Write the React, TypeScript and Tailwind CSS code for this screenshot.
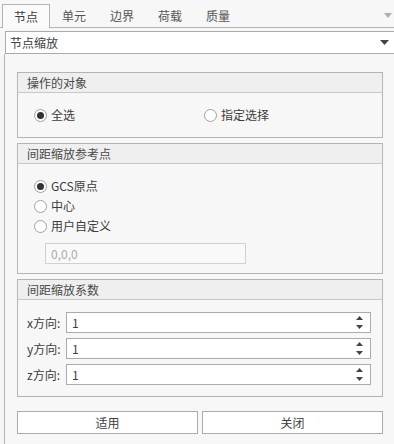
import React from 'react'

const font = { fontFamily: '"Noto Sans CJK SC", "Noto Sans", sans-serif' }

const tabs = ['节点', '单元', '边界', '荷载', '质量']

const Radio = ({ checked, label }: { checked?: boolean; label: string }) => (
  <div className="flex items-center gap-[4px] h-[20px]">
    <span className="w-[13px] h-[13px] rounded-full border border-[#a0a0a0] bg-white flex items-center justify-center">
      {checked && <span className="w-[7px] h-[7px] rounded-full bg-[#333]" />}
    </span>
    <span className="text-[12px] text-[#3c3c3c] leading-none">{label}</span>
  </div>
)

const GroupBox = ({ title, className, children }: { title: string; className: string; children: React.ReactNode }) => (
  <div className={`border border-[#b4b4b4] bg-[#f7f7f7] flex flex-col ${className}`}>
    <div className="h-[20px] bg-[#efefef] border-b border-[#c8c8c8] pl-[9px] flex items-center text-[12px] text-[#4a4a4a] shrink-0">
      {title}
    </div>
    {children}
  </div>
)

const Spin = ({ label }: { label: string }) => (
  <div className="flex items-center h-[21px]">
    <span className="w-[39px] text-[12px] text-[#3c3c3c]">{label}</span>
    <div className="w-[305px] h-[21px] border border-[#ababab] bg-white flex items-center justify-between pl-[5px] pr-[6px]">
      <span className="text-[12px] text-[#3c3c3c]">1</span>
      <svg width="9" height="15" viewBox="0 0 9 15">
        <path d="M1 5 L4.5 1 L8 5 Z" fill="#444" />
        <path d="M1 10 L4.5 14 L8 10 Z" fill="#444" />
      </svg>
    </div>
  </div>
)

export default function App() {
  return (
    <div className="w-[394px] h-[444px] bg-[#f7f7f7] overflow-hidden flex flex-col" style={font}>
      {/* tabs */}
      <div className="h-[28px] flex items-end pl-[2px] border-b border-[#b4b4b4] relative shrink-0">
        {tabs.map((t, i) => (
          <div
            key={t}
            className={
              i === 0
                ? 'w-[48px] h-[24px] -mb-px bg-[#fafafa] border border-b-0 border-[#b4b4b4] flex items-center justify-center text-[12px] text-[#3c3c3c]'
                : 'w-[48px] h-[23px] flex items-center justify-center text-[12px] text-[#555]'
            }
          >
            {t}
          </div>
        ))}
        <svg className="absolute right-[2px] top-[13px]" width="8" height="5" viewBox="0 0 8 5">
          <path d="M0 0 L8 0 L4 5 Z" fill="#b0b0b0" />
        </svg>
      </div>

      {/* dropdown */}
      <div className="mt-[3px] ml-[5px] h-[23px] border border-r-0 border-[#ababab] bg-white flex items-center justify-between pl-[4px] pr-[5px] shrink-0">
        <span className="text-[12px] text-[#3c3c3c]">节点缩放</span>
        <svg width="9" height="5" viewBox="0 0 9 5">
          <path d="M0 0 L9 0 L4.5 5 Z" fill="#444" />
        </svg>
      </div>

      {/* panel */}
      <div className="ml-[4px] flex-1 border-l border-[#b4b4b4] pl-[12px] pt-[18px] flex flex-col">
        <GroupBox title="操作的对象" className="w-[366px] h-[66px]">
          <div className="flex items-center flex-1 pl-[16px]">
            <div className="w-[170px]">
              <Radio checked label="全选" />
            </div>
            <Radio label="指定选择" />
          </div>
        </GroupBox>

        <GroupBox title="间距缩放参考点" className="w-[366px] h-[131px] mt-[5px]">
          <div className="flex flex-col pl-[16px] pt-[12px]">
            <Radio checked label="GCS原点" />
            <Radio label="中心" />
            <Radio label="用户自定义" />
            <div className="ml-[11px] mt-[7px] w-[201px] h-[21px] border border-[#d0d0d0] bg-[#f9f9f9] flex items-center pl-[5px] text-[12px] text-[#aaa]">
              0,0,0
            </div>
          </div>
        </GroupBox>

        <GroupBox title="间距缩放系数" className="w-[366px] h-[118px] mt-[5px]">
          <div className="flex flex-col gap-[5px] pl-[9px] pt-[12px]">
            <Spin label="x方向:" />
            <Spin label="y方向:" />
            <Spin label="z方向:" />
          </div>
        </GroupBox>

        <div className="flex gap-[4px] mt-[14px] w-[366px]">
          <button className="w-[181px] h-[23px] border border-[#ababab] bg-white text-[12px] text-[#3c3c3c]">适用</button>
          <button className="w-[181px] h-[23px] border border-[#ababab] bg-white text-[12px] text-[#3c3c3c]">关闭</button>
        </div>
      </div>
    </div>
  )
}
